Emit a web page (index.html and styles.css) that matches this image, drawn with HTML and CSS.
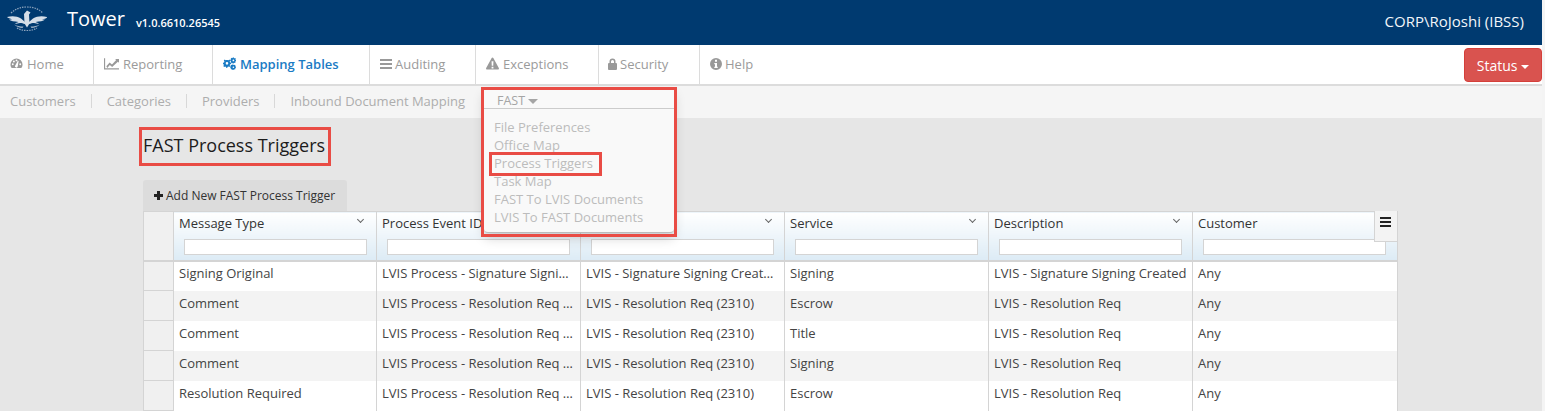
FILE: index.html
```html
<!DOCTYPE html>
<html lang="en">
<head>
<meta charset="utf-8">
<title>Tower</title>
<link rel="stylesheet" href="styles.css">
</head>
<body>
<div class="app">
  <header class="topbar">
    <svg class="logo" viewBox="0 0 40 26" width="40" height="26" aria-hidden="true">
      <path class="logo-ring" d="M4 7C9 2.500 14 1 20 1s11 1.500 16 6" />
      <path class="logo-ring" d="M10 22c3 1.800 6 2.500 10 2.500s7-.7 10-2.500" />
      <path class="logo-wing" d="M0 11c5-1.500 10-1 14 1.500l4 3.500v2c-2-.5-3-1-5-1l-5 1c1-1 2-1.500 3.500-2-4-.5-8-1-9.500-2.500 1 0 2 0 3-.3C3 12.500 1 12 0 11z" />
      <path class="logo-wing" d="M40 11c-5-1.500-10-1-14 1.500l-4 3.500v2c2-.5 3-1 5-1l5 1c-1-1-2-1.500-3.500-2 4-.5 8-1 9.500-2.500-1 0-2 0-3-.3 2 0 4-.500 5-1.700z" />
      <path class="logo-wing" d="M17 8l3-3.500 3.500 2-1.500 2 .5 9-2.500 4-2.500-4z" />
      <path class="logo-soft" d="M7 18.500c3 1.500 6 2 9.500 2l-1 1.500c-3 0-6-1.500-8.500-3.500zM33 18.500c-3 1.500-6 2-9.500 2l1 1.500c3 0 6-1.500 8.500-3.500z" />
    </svg>
    <span class="brand">Tower</span>
    <span class="version">v1.0.6610.26545</span>
    <span class="user">CORP\RoJoshi (IBSS)</span>
  </header>

  <nav class="mainnav">
    <a class="nav-item nav-home">
      <svg class="ico" viewBox="0 0 14 14"><path fill-rule="evenodd" d="M7 1.500a6.500 6.500 0 0 0-6.500 6.500c0 1.500.5 2.800 1.300 3.800h10.400c.8-1 1.300-2.300 1.300-3.800A6.500 6.500 0 0 0 7 1.500zM3 8.800a1 1 0 1 1 0-2 1 1 0 0 1 0 2zm1.200-3a1 1 0 1 1 0-2 1 1 0 0 1 0 2zM7 4.700a1 1 0 1 1 0-2 1 1 0 0 1 0 2zm1.300 5.600a1.500 1.500 0 1 1-2.500-1.500L8.500 4l.8.3zM11 8.800a1 1 0 1 1 0-2 1 1 0 0 1 0 2z"/></svg>
      Home</a>
    <a class="nav-item nav-reporting">
      <svg class="ico ico-chart" viewBox="0 0 16 13"><path d="M0 1h1.200v10.500H16V13H0z"/><path d="M2.500 9.500l3.500-4 2.500 2L13 2.800l-1.200-1.200H16v4.200l-1.200-1.200-6.100 5.600-2.500-2-2.700 3z"/></svg>
      Reporting</a>
    <a class="nav-item nav-mapping active">
      <svg class="ico ico-cogs" viewBox="0 0 15 14"><path fill-rule="evenodd" d="M5 3l1.400.3.900-.8 1.100 1.100-.7 1 .5 1.200 1.200.2v1.600l-1.200.2-.5 1.200.7 1-1.100 1.100-1-.7-1.200.5-.2 1.200H3.800l-.2-1.200-1.200-.5-1 .7-1.100-1.100.7-1-.3-1.200L0 7.600V6l1.200-.2.4-1.200-.7-1L2 2.500l1 .7L4 3zm-.4 2.300a1.500 1.500 0 1 0 0 3 1.500 1.500 0 0 0 0-3z"/><path fill-rule="evenodd" d="M12 0a2 2 0 0 1 .6.100l.2.700.7.200.5-.4.800.9-.4.500.1.700.7.300v1.200l-.7.200-.3.700.4.600-.9.800-.5-.4-.7.200-.2.700h-1.200l-.2-.7-.6-.2-.6.400-.8-.8.400-.6-.3-.7-.6-.2V2.800l.7-.3.200-.7-.4-.5.800-.9.600.4.600-.2L11.400.1 12 0zm0 2.400a1 1 0 1 0 0 2 1 1 0 0 0 0-2zM12 8.300l1.100.3.600-.3.700.8-.3.600.3.700.6.300v1.100l-.6.200-.3.700.3.600-.8.700-.6-.3-.7.300-.2.500h-1.100l-.2-.6-.7-.3-.5.300-.8-.7.300-.6-.3-.7-.6-.2v-1.100l.6-.2.300-.7-.3-.6.8-.8.500.3.700-.3.200-.5zm0 2.200a.9.9 0 1 0 0 1.800.9.9 0 0 0 0-1.800z"/></svg>
      Mapping Tables</a>
    <a class="nav-item nav-auditing">
      <svg class="ico ico-bars" viewBox="0 0 12 10"><path d="M0 0h12v2H0zM0 4h12v2H0zM0 8h12v2H0z"/></svg>
      Auditing</a>
    <a class="nav-item nav-exceptions">
      <svg class="ico" viewBox="0 0 14 13"><path fill-rule="evenodd" d="M7 0c.4 0 .7.200.9.500l5.900 10.800c.4.700-.1 1.700-.9 1.700H1.100c-.8 0-1.300-1-.9-1.700L6.100.5C6.300.2 6.600 0 7 0zM6 4l.2 5h1.600L8 4zm0 6v2h2v-2z"/></svg>
      Exceptions</a>
    <a class="nav-item nav-security">
      <svg class="ico ico-lock" viewBox="0 0 9 12"><path fill-rule="evenodd" d="M1.500 5V3.500a3 3 0 0 1 6 0V5h.6c.5 0 .9.400.9.900v5.200c0 .5-.4.900-.9.900H.9c-.5 0-.9-.4-.9-.9V5.900c0-.5.400-.9.900-.9zM3 5h3V3.500a1.500 1.500 0 0 0-3 0z"/></svg>
      Security</a>
    <a class="nav-item nav-help">
      <svg class="ico ico-info" viewBox="0 0 12 12"><path fill-rule="evenodd" d="M6 0a6 6 0 1 1 0 12A6 6 0 0 1 6 0zM5 1.800v2h2v-2zM4.300 5v1.200H5v2.500h-.7V10h3.400V8.700H7V5z"/></svg>
      Help</a>
    <button class="status-btn">Status <span class="caret"></span></button>
  </nav>

  <div class="subnav">
    <a class="sub-item">Customers</a>
    <a class="sub-item">Categories</a>
    <a class="sub-item">Providers</a>
    <a class="sub-item sub-last">Inbound Document Mapping</a>
  </div>

  <main class="content">
    <h1 class="title">FAST Process Triggers</h1>
    <button class="add-btn"><span class="plus"></span>Add New FAST Process Trigger</button>
    <table class="grid">
      <colgroup>
        <col class="c0"><col class="c1"><col class="c2"><col class="c3"><col class="c4"><col class="c5"><col class="c6">
      </colgroup>
      <thead>
        <tr>
          <th class="sel"></th>
          <th><div class="h-label">Message Type<i class="chev"></i></div><input class="filter"></th>
          <th><div class="h-label">Process Event ID<i class="chev"></i></div><input class="filter"></th>
          <th><div class="h-label">Process Event<i class="chev"></i></div><input class="filter"></th>
          <th><div class="h-label">Service<i class="chev"></i></div><input class="filter"></th>
          <th><div class="h-label">Description<i class="chev"></i></div><input class="filter"></th>
          <th><div class="h-label">Customer<i class="chev"></i></div><input class="filter"></th>
        </tr>
      </thead>
      <tbody>
        <tr><td class="sel"></td><td>Signing Original</td><td>LVIS Process - Signature Signing Created</td><td>LVIS - Signature Signing Created (2305)</td><td>Signing</td><td>LVIS - Signature Signing Created</td><td>Any</td></tr>
        <tr><td class="sel"></td><td>Comment</td><td>LVIS Process - Resolution Req (2310)</td><td>LVIS - Resolution Req (2310)</td><td>Escrow</td><td>LVIS - Resolution Req</td><td>Any</td></tr>
        <tr><td class="sel"></td><td>Comment</td><td>LVIS Process - Resolution Req (2310)</td><td>LVIS - Resolution Req (2310)</td><td>Title</td><td>LVIS - Resolution Req</td><td>Any</td></tr>
        <tr><td class="sel"></td><td>Comment</td><td>LVIS Process - Resolution Req (2310)</td><td>LVIS - Resolution Req (2310)</td><td>Signing</td><td>LVIS - Resolution Req</td><td>Any</td></tr>
        <tr><td class="sel"></td><td>Resolution Required</td><td>LVIS Process - Resolution Req (2310)</td><td>LVIS - Resolution Req (2310)</td><td>Escrow</td><td>LVIS - Resolution Req</td><td>Any</td></tr>
      </tbody>
    </table>
  </main>

  <div class="grid-menu"><span></span><span></span><span></span></div>

  <div class="dropdown">
    <div class="dd-toggle">FAST <span class="caret"></span></div>
    <ul class="dd-list">
      <li>File Preferences</li>
      <li>Office Map</li>
      <li>Process Triggers</li>
      <li>Task Map</li>
      <li>FAST To LVIS Documents</li>
      <li>LVIS To FAST Documents</li>
    </ul>
  </div>

  <div class="mark mark-title"></div>
  <div class="mark mark-fast"></div>
  <div class="mark mark-item"></div>
</div>
</body>
</html>
```
FILE: styles.css
```css
* { box-sizing: border-box; }
html, body { margin: 0; padding: 0; height: 411px; overflow: hidden; background: #f4f4f4; }
body { font-family: "Open Sans", "Liberation Sans", sans-serif; font-size: 13px; color: #333; }

.app { position: relative; width: 1542px; height: 411px; overflow: hidden; background: #e6e6e6; }

.topbar { display: flex; align-items: center; height: 45px; background: #003a70; color: #fff; padding-left: 7px; }
.logo { flex: none; margin-top: -8px; }
.logo-ring { fill: none; stroke: #8fa6bf; stroke-width: 1.200; stroke-dasharray: 1.500 1; }
.logo-wing { fill: #d5dee8; }
.logo-soft { fill: #9fb2c6; }
.brand { font-size: 20px; margin-left: 20px; margin-top: -8px; line-height: 24px; }
.version { font-size: 11px; font-weight: 600; margin-left: 11px; margin-top: -1px; }
.user { margin-left: auto; margin-right: 18px; font-size: 15px; margin-top: -3px; color: #f2f6fa; }

.mainnav { display: flex; align-items: flex-start; height: 41px; background: #fff; border-bottom: 2px solid #dcdcdc; }
.nav-item { display: flex; align-items: center; height: 39px; padding-bottom: 2px; font-size: 13px; color: #9b9b9b; padding-left: 10px; border-right: 1px solid #dcdcdc; }
.ico { width: 13px; height: 13px; fill: #999; margin-right: 4px; flex: none; }
.nav-home { width: 94px; }
.nav-reporting { width: 119px; }
.nav-mapping { width: 157px; color: #1a7bc4; font-weight: 600; }
.nav-mapping .ico { fill: #1a7bc4; }
.nav-auditing { width: 106px; }
.nav-auditing .ico { margin-right: 3px; }
.nav-exceptions { width: 123px; }
.nav-security { width: 101px; padding-left: 9px; }
.nav-security .ico { margin-right: 3px; }
.nav-help { border-right: 0; }
.nav-help .ico { margin-right: 3px; }
.ico-chart { width: 15px; }
.ico-bars { width: 12px; height: 10px; }
.ico-lock { width: 9px; height: 12px; }
.ico-info { width: 12px; height: 12px; }
.status-btn { margin: 3px 0 0 auto; width: 78px; height: 34px; background: #d9534f; color: #fff; border: 1px solid #d43f3a; border-radius: 4px; font: 14px "Open Sans", sans-serif; padding: 0; }
.caret { display: inline-block; width: 0; height: 0; vertical-align: middle; border-top: 4px solid currentColor; border-left: 4px solid transparent; border-right: 4px solid transparent; }

.subnav { display: flex; align-items: center; height: 32px; padding-bottom: 2px; background: #f5f5f5; }
.sub-item { color: #adadad; font-size: 13px; padding: 0 15px; line-height: 14px; border-right: 1px solid #d8d8d8; }
.sub-item:first-child { padding-left: 10px; }
.sub-last { border-right: 0; }

.content { padding: 10px 0 0 143px; }
.title { margin: 0; font-size: 18px; font-weight: 400; line-height: 34px; color: #1c1c1c; }
.add-btn { display: flex; align-items: center; width: 204px; height: 31px; margin-top: 18px; padding: 0 0 0 11px; background: #dcdcdc; border: 0; border-radius: 3px 3px 0 0; font: 12px "Open Sans", sans-serif; color: #333; }
.plus { width: 9px; height: 9px; margin-right: 3px; background: linear-gradient(#222,#222) center/9px 3px no-repeat, linear-gradient(#222,#222) center/3px 9px no-repeat; }

.grid { table-layout: fixed; border-collapse: collapse; width: 1254px; background: #fff; font-size: 13px; }
.c0 { width: 30px; } .c1 { width: 203px; } .c2 { width: 204px; } .c3 { width: 204px; } .c4 { width: 204px; } .c5 { width: 204px; } .c6 { width: 205px; }
.grid th { height: 49px; padding: 0; vertical-align: top; font-weight: 500; text-align: left; color: #333; background: linear-gradient(#fff, #dcebf5); border: 1px solid #d4d4d4; border-width: 1px 1px 2px 1px; }
.grid th.sel { background: #f0f0f0; }
.h-label { position: relative; height: 27px; padding: 2px 5px 0; line-height: 18px; white-space: nowrap; overflow: hidden; }
.chev { position: absolute; right: 13px; top: 5px; width: 5px; height: 5px; border-right: 1px solid #666; border-bottom: 1px solid #666; transform: rotate(45deg); }
.filter { display: block; width: 183px; height: 16px; margin: 0 0 0 10px; padding: 0; border: 1px solid #d4d4d4; background: #fff; }
.grid td { height: 30px; padding: 0 5px 5px; white-space: nowrap; overflow: hidden; text-overflow: ellipsis; color: #444; border-right: 1px solid #d4d4d4; }
.grid tbody tr:first-child td { padding-bottom: 7px; }
.grid td.sel { background: #f0f0f0; border: 1px solid #d4d4d4; }
.grid tbody tr:nth-child(even) td:not(.sel) { background: #f3f3f3; }

.grid-menu { position: absolute; left: 1374px; top: 211px; width: 23px; height: 31px; padding: 6px 0 0 5px; background: #f3f3f3; border: 1px solid #d4d4d4; border-width: 0 0 1px 1px; }
.grid-menu span { display: block; width: 11px; height: 2px; margin-bottom: 2px; background: #222; }

.dropdown { position: absolute; left: 484px; top: 90px; width: 190px; height: 143px; background: #f9f9f9; border-radius: 0 0 4px 4px; border-bottom: 1px solid #bbb; box-shadow: 0 5px 12px rgba(0,0,0,.18); }
.dd-toggle { height: 19px; padding-left: 13px; font-size: 12.500px; line-height: 21px; color: #a5a5a5; border-bottom: 1px solid #ccc; }
.dd-toggle .caret { border-top-width: 5px; border-left-width: 5px; border-right-width: 5px; }
.dd-list { list-style: none; margin: 9px 0 0; padding: 0 0 0 10px; font-size: 13px; line-height: 18px; color: #bcbcbc; }

.mark { position: absolute; border: 3px solid #e94c45; }
.mark-title { left: 139px; top: 127px; width: 192px; height: 39px; }
.mark-fast { left: 481px; top: 87px; width: 196px; height: 150px; }
.mark-item { left: 489px; top: 152px; width: 113px; height: 24px; }
```
